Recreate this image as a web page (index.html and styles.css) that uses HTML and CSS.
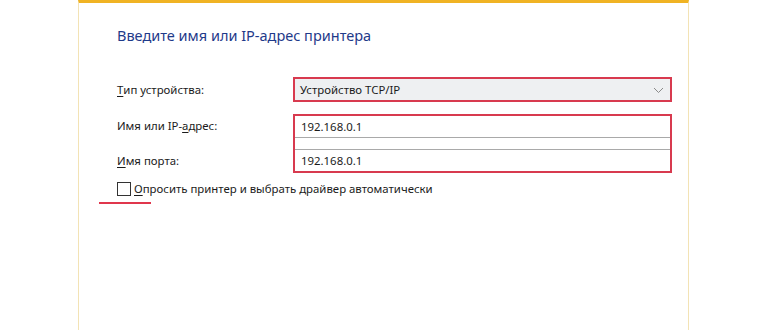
FILE: index.html
```html
<!DOCTYPE html>
<html lang="ru">
<head>
    <meta charset="UTF-8">
    <title>Добавить принтер</title>
    <link rel="stylesheet" href="styles.css">
</head>
<body>
    <div class="window">
        <h1 class="title">Введите имя или IP-адрес принтера</h1>

        <div class="form">
            <label class="label"><u>Т</u>ип устройства:</label>
            <div class="select marked">
                <span>Устройство TCP/IP</span>
                <svg class="chevron" width="11" height="7" viewBox="0 0 11 7"><path d="M1 1 L5.5 5.5 L10 1" fill="none" stroke="#8a8a8a" stroke-width="1"/></svg>
            </div>

            <div class="labels">
                <label class="label">Имя или IP-<u>а</u>дрес:</label>
                <label class="label"><u>И</u>мя порта:</label>
            </div>
            <div class="fields marked">
                <div class="input">192.168.0.1</div>
                <div class="input">192.168.0.1</div>
            </div>
        </div>

        <div class="check-row">
            <span class="checkbox"></span>
            <span><u>О</u>просить принтер и выбрать драйвер автоматически</span>
        </div>
        <div class="mark-line"></div>
    </div>
</body>
</html>
```

FILE: styles.css
```css
body {
    margin: 0;
    background-color: #fff;
    font-family: "Noto Sans", "Open Sans", sans-serif;
    color: #1b1b1b;
}

.window {
    margin-left: 78px;
    width: 611px;
    height: 340px;
    border-top: 3px solid #f0b323;
    border-left: 1px solid #f3e3b5;
    border-right: 1px solid #f3e3b5;
    padding-left: 38px;
    box-sizing: border-box;
}

.title {
    margin: 22px 0 0 0;
    font-size: 14.5px;
    font-weight: normal;
    color: #1f3a8a;
    line-height: 20px;
}

u {
    text-decoration-thickness: 1px;
    text-underline-offset: 2px;
}

.form {
    display: grid;
    grid-template-columns: 176px 379px;
    row-gap: 12px;
    margin-top: 32px;
    font-size: 11.4px;
}

.label {
    display: flex;
    align-items: center;
}

.marked {
    border: 2px solid #d83a4f;
    box-sizing: border-box;
}

.select {
    height: 25px;
    background-color: #eef0f2;
    display: flex;
    align-items: center;
    justify-content: space-between;
    padding: 0 6px 0 5px;
}

.chevron {
    margin-top: 1px;
}

.labels {
    display: flex;
    flex-direction: column;
    justify-content: space-between;
    padding: 0 0 2px 0;
}

.labels .label {
    height: 22px;
}

.fields {
    height: 59px;
    display: flex;
    flex-direction: column;
    justify-content: space-between;
    background-color: #fff;
}

.input {
    height: 21px;
    display: flex;
    align-items: center;
    padding-left: 6px;
}

.input:first-child {
    border-bottom: 1px solid #a9a9a9;
}

.input:last-child {
    border-top: 1px solid #a9a9a9;
}

.check-row {
    display: flex;
    align-items: center;
    gap: 3px;
    margin-top: 8px;
    font-size: 11.4px;
}

.checkbox {
    width: 12px;
    height: 12px;
    border: 1px solid #333;
}

.mark-line {
    width: 52px;
    height: 2px;
    background-color: #e0364c;
    margin: 6px 0 0 -18px;
}
```
